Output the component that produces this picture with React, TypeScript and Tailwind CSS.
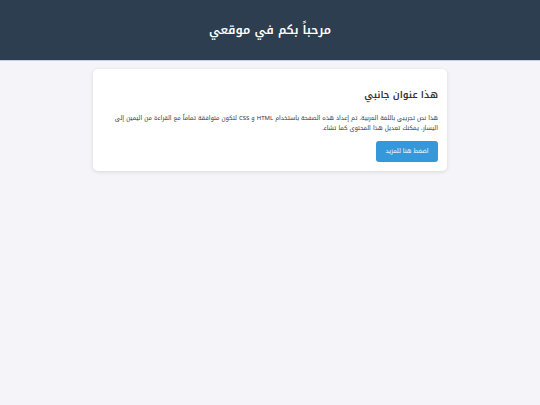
export default function App() {
  return (
    <div dir="rtl" className="min-h-[405px] bg-[#f4f4f9]" style={{ fontFamily: '"Noto Kufi Arabic", sans-serif' }}>
      <header className="h-[61px] bg-[#2c3e50] flex items-center justify-center border-b border-[#c9cde0]">
        <h1 className="text-white text-[12px] font-semibold">مرحباً بكم في موقعي</h1>
      </header>
      <main className="w-[354px] mx-auto mt-[8px] bg-white rounded-[5px] shadow-[0_1px_4px_rgba(0,0,0,0.12)] px-[9px] pt-[19px] pb-[9px]">
        <h2 className="text-[9.5px] font-semibold text-[#333] mb-[11px]">هذا عنوان جانبي</h2>
        <p className="text-[6px] leading-[10px] text-[#333]">
          هذا نص تجريبي باللغة العربية. تم إعداد هذه الصفحة باستخدام HTML و CSS لتكون متوافقة تماماً مع القراءة من اليمين إلى اليسار. يمكنك تعديل هذا المحتوى كما تشاء.
        </p>
        <div className="mt-[3px]">
          <button className="bg-[#3498db] text-white text-[6px] rounded-[3px] w-[62px] h-[21px]">اضغط هنا للمزيد</button>
        </div>
      </main>
    </div>
  );
}
